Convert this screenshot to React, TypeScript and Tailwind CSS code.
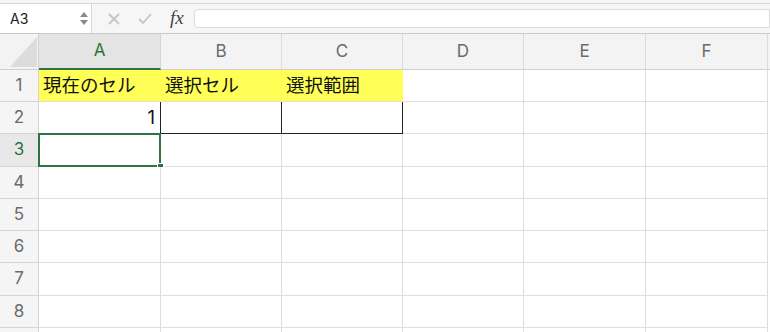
import React from "react";

const cols = [
  { key: "A", w: 122 },
  { key: "B", w: 121 },
  { key: "C", w: 121 },
  { key: "D", w: 121 },
  { key: "E", w: 122 },
  { key: "F", w: 122 },
];

const rowHeights = [32, 32, 33, 32, 32, 32, 33, 32, 32];

const font = { fontFamily: '"Inter", "Noto Sans CJK JP", sans-serif' };

const Toolbar = () => (
  <div className="h-[34px] bg-[#f6f6f6] pt-[3px] border-b border-[#c9c9c9]">
    <div className="h-full border-t border-[#d6d6d6] flex items-stretch">
      <div className="w-[92px] bg-white border-r border-[#d9d9d9] flex items-center justify-between pl-[10px] pr-[3px] text-[14px] text-[#222]">
        <span>A3</span>
        <div className="flex flex-col items-center gap-[3px]">
          <svg width="8" height="5" viewBox="0 0 8 5">
            <path d="M4 0 L8 5 L0 5 Z" fill="#8a8a8a" />
          </svg>
          <svg width="8" height="5" viewBox="0 0 8 5">
            <path d="M0 0 L8 0 L4 5 Z" fill="#8a8a8a" />
          </svg>
        </div>
      </div>
      <div className="flex items-center pl-[16px] gap-[18px]">
        <svg width="12" height="12" viewBox="0 0 12 12">
          <path d="M1 1 L11 11 M11 1 L1 11" stroke="#c4c4c4" strokeWidth="1.8" />
        </svg>
        <svg width="14" height="12" viewBox="0 0 14 12">
          <path d="M1 6 L5 10 L13 1" stroke="#c4c4c4" strokeWidth="1.8" fill="none" />
        </svg>
        <span
          className="text-[19px] italic text-[#444]"
          style={{ fontFamily: '"Liberation Serif", serif' }}
        >
          fx
        </span>
      </div>
      <div className="flex-1 pl-[10px] py-[5px]">
        <div className="h-full bg-white border border-[#dcdcdc] rounded-l-[4px]" />
      </div>
    </div>
  </div>
);

const HeaderRow = () => (
  <div className="flex h-[36px] bg-[#f3f3f3] border-b border-[#d0d0d0]">
    <div className="w-[39px] shrink-0 border-r border-[#d0d0d0] relative">
      <svg className="absolute left-[10px] top-[3px]" width="27" height="30" viewBox="0 0 27 30">
        <path d="M27 0 L27 30 L0 30 Z" fill="#dcdcdc" />
      </svg>
    </div>
    {cols.map((c) => {
      const sel = c.key === "A";
      return (
        <div
          key={c.key}
          style={{ width: c.w }}
          className={
            "shrink-0 flex items-center justify-center text-[17px] border-r " +
            (sel
              ? "bg-[#e4e4e4] text-[#2f7342] border-[#d4d4d4] border-b-2 border-b-[#2f7342] -mb-px"
              : "text-[#6b6b6b] border-[#dcdcdc]")
          }
        >
          {c.key}
        </div>
      );
    })}
  </div>
);

const Cell = ({ r, ci, w }: { r: number; ci: number; w: number }) => {
  const yellow = r === 1 && ci < 3;
  const boxed = r === 2 && (ci === 1 || ci === 2);
  const leftOfBox = r === 2 && ci === 0;
  let content: React.ReactNode = null;
  if (r === 1 && ci === 0) content = "現在のセル";
  if (r === 1 && ci === 1) content = "選択セル";
  if (r === 1 && ci === 2) content = "選択範囲";
  if (r === 2 && ci === 0) content = "1";
  return (
    <div
      style={{ width: w }}
      className={
        "shrink-0 h-full flex items-center px-[4px] text-[18.5px] text-[#111] border-r border-b " +
        (yellow ? "bg-[#ffff55] border-r-[#ffff55] " : "bg-white ") +
        (boxed ? "border-[#222] " : "border-[#dedede] ") +
        (leftOfBox ? "border-r-[#222] justify-end pr-[5px]" : "")
      }
    >
      {content}
    </div>
  );
};

export default function App() {
  return (
    <div className="w-[770px] h-[332px] overflow-hidden bg-white" style={font}>
      <Toolbar />
      <HeaderRow />
      {rowHeights.map((h, i) => {
        const r = i + 1;
        const sel = r === 3;
        return (
          <div key={r} className="flex relative" style={{ height: h }}>
            <div
              className={
                "w-[39px] shrink-0 flex items-center justify-center text-[17px] border-r border-b border-[#d4d4d4] " +
                (sel ? "bg-[#e8e8e8] text-[#2f7342]" : "bg-[#f5f5f5] text-[#6b6b6b]")
              }
            >
              {r < 9 ? r : ""}
            </div>
            {cols.map((c, ci) => (
              <Cell key={c.key} r={r} ci={ci} w={c.w} />
            ))}
            {sel && (
              <div className="absolute left-[38px] -top-px w-[123px] h-[34px] border-2 border-[#2f7342] pointer-events-none">
                <div className="absolute -right-[5px] -bottom-[5px] w-[7px] h-[7px] bg-[#2f7342] border border-white" />
              </div>
            )}
          </div>
        );
      })}
    </div>
  );
}
